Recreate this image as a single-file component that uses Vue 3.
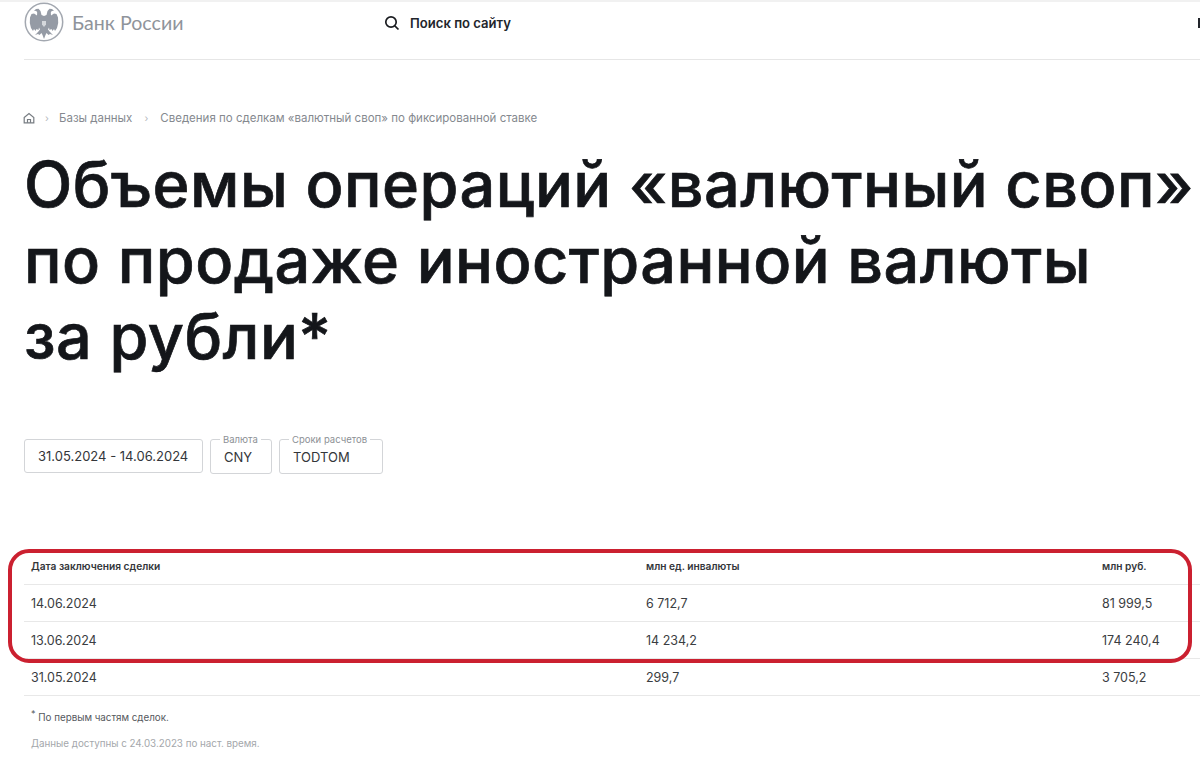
<template>
  <div class="page">
    <header class="top">
      <div class="logo">
        <svg class="emblem" viewBox="0 0 40 40" width="40" height="40">
          <circle cx="20" cy="20" r="18.700" fill="#fff" stroke="#a3a8b0" stroke-width="1.500" />
          <g fill="#959ba5">
            <path d="M20 14L17.500 13 16.500 9 14.500 6.800 12 7 10 8.700 12.300 9 13.200 10.500 13 13.500 10 11.500 7.500 12 6 15.500 5.800 21 7 26 9 29 10 27 11.500 29 12.500 27 14.500 28 15 25.500 16 27.500 14 30 11 33 14 32 15.500 33 17.500 31 18.500 33 20 37z" />
            <path transform="matrix(-1 0 0 1 40 0)" d="M20 14L17.500 13 16.500 9 14.500 6.800 12 7 10 8.700 12.300 9 13.200 10.500 13 13.500 10 11.500 7.500 12 6 15.500 5.800 21 7 26 9 29 10 27 11.500 29 12.500 27 14.500 28 15 25.500 16 27.500 14 30 11 33 14 32 15.500 33 17.500 31 18.500 33 20 37z" />
          </g>
          <path fill="#d5d8dc" d="M18 19h4v3.500l-2 2.500-2-2.500z" />
        </svg>
        <span class="logo-text">Банк России</span>
      </div>
      <div class="search">
        <svg viewBox="0 0 16 16" width="16" height="16" fill="none" stroke="#1a1c20" stroke-width="1.700">
          <circle cx="7" cy="7" r="5.200" />
          <path d="M10.800 10.800l3.700 3.700" />
        </svg>
        <span>Поиск по сайту</span>
      </div>
      <span class="cut-icon"></span>
    </header>

    <nav class="crumbs">
      <svg viewBox="0 0 12 12" width="12" height="12" fill="none" stroke="#777c82" stroke-width="1.200">
        <path d="M1.200 5.500L6 1.500l4.800 4V10.800H1.200z" />
        <path d="M4.500 10.800V7.500h3v3.300" />
      </svg>
      <span class="dot">›</span>
      <span>Базы данных</span>
      <span class="dot wide">›</span>
      <span>Сведения по сделкам «валютный своп» по фиксированной ставке</span>
    </nav>

    <h1>Объемы операций «валютный своп»<br />по продаже иностранной валюты<br />за рубли*</h1>

    <div class="filters">
      <div class="field date">31.05.2024 - 14.06.2024</div>
      <div class="field cur"><label>Валюта</label>CNY</div>
      <div class="field term"><label>Сроки расчетов</label>TODTOM</div>
    </div>

    <div class="table">
      <div class="row head">
        <span>Дата заключения сделки</span>
        <span>млн ед. инвалюты</span>
        <span>млн руб.</span>
      </div>
      <div v-for="r in rows" :key="r[0]" class="row">
        <span>{{ r[0] }}</span>
        <span>{{ r[1] }}</span>
        <span>{{ r[2] }}</span>
      </div>
      <div class="mark"></div>
    </div>

    <p class="note"><sup>*</sup> По первым частям сделок.</p>
    <p class="avail">Данные доступны с 24.03.2023 по наст. время.</p>
  </div>
</template>

<script setup>
const rows = [
  ['14.06.2024', '6 712,7', '81 999,5'],
  ['13.06.2024', '14 234,2', '174 240,4'],
  ['31.05.2024', '299,7', '3 705,2']
]
</script>

<style>
html,
body {
  margin: 0;
  background: #fff;
}
</style>

<style scoped>
.page {
  height: 771px;
  overflow: hidden;
  font-family: Inter, "Liberation Sans", sans-serif;
  color: #2b2d31;
  box-sizing: border-box;
  border-top: 2px solid #f1f1f1;
}

.top {
  display: flex;
  align-items: center;
  height: 56px;
  margin-left: 24px;
  padding-bottom: 1px;
  border-bottom: 1px solid #e6e6e6;
  position: relative;
}

.logo {
  display: flex;
  align-items: center;
  width: 360px;
  gap: 8px;
  margin-top: -16px;
}

.logo-text {
  font-family: Lato, sans-serif;
  font-size: 19.600px;
  color: #8f949b;
}

.search {
  display: flex;
  align-items: center;
  gap: 10px;
  font-size: 13.100px;
  font-weight: 600;
  color: #22252b;
  margin-top: -14px;
}

.cut-icon {
  position: absolute;
  right: 0;
  top: 16px;
  width: 2px;
  height: 10px;
  background: #22252b;
}

.crumbs {
  display: flex;
  align-items: center;
  margin: 50px 0 0 23px;
  height: 15px;
  font-size: 11.500px;
  color: #85898f;
}

.dot {
  width: 24px;
  text-align: center;
  color: #b5b8bc;
  font-size: 10px;
}

.dot.wide {
  width: 28px;
}

h1 {
  margin: 21px 0 0 24px;
  font-size: 63px;
  letter-spacing: 0.45px;
  line-height: 76px;
  font-weight: 500;
  -webkit-text-stroke: 0.7px #14161a;
  color: #14161a;
  white-space: nowrap;
}

.filters {
  display: flex;
  align-items: flex-start;
  gap: 7px;
  margin: 65px 0 0 24px;
}

.field {
  position: relative;
  box-sizing: border-box;
  height: 34px;
  border: 1px solid #d3d5d8;
  border-radius: 3px;
  font-size: 13px;
  line-height: 33px;
  padding-left: 13px;
  color: #33363a;
}

.date {
  width: 179px;
}

.cur,
.term {
  height: 35px;
  line-height: 35px;
}

.cur {
  width: 62px;
}

.term {
  width: 104px;
}

.field label {
  position: absolute;
  left: 9px;
  top: -5px;
  padding: 0 3px;
  background: #fff;
  font-size: 9.500px;
  line-height: 10px;
  color: #8c9095;
}

.table {
  position: relative;
  margin: 75px 0 0 24px;
}

.row {
  display: grid;
  grid-template-columns: 615px 456px 1fr;
  align-items: center;
  height: 37px;
  padding-left: 7px;
  border-bottom: 1px solid #e8e8e8;
  font-size: 12.500px;
  color: #3a3d41;
  box-sizing: border-box;
}

.row.head {
  height: 36px;
  padding-bottom: 2px;
  font-size: 10.200px;
  font-weight: 600;
  color: #33363a;
}

.row:last-of-type {
  height: 39px;
}

.mark {
  position: absolute;
  left: -16px;
  right: 8px;
  top: 0;
  height: 114px;
  box-sizing: border-box;
  border: 4px solid #cb2030;
  border-radius: 21px;
}

.note {
  margin: 15px 0 0 31px;
  font-size: 9.800px;
  line-height: 14px;
  color: #55585d;
}

.note sup {
  font-size: 9px;
  line-height: 0;
}

.avail {
  margin: 12px 0 0 31px;
  font-size: 9.800px;
  line-height: 14px;
  color: #a4a7ab;
}
</style>
